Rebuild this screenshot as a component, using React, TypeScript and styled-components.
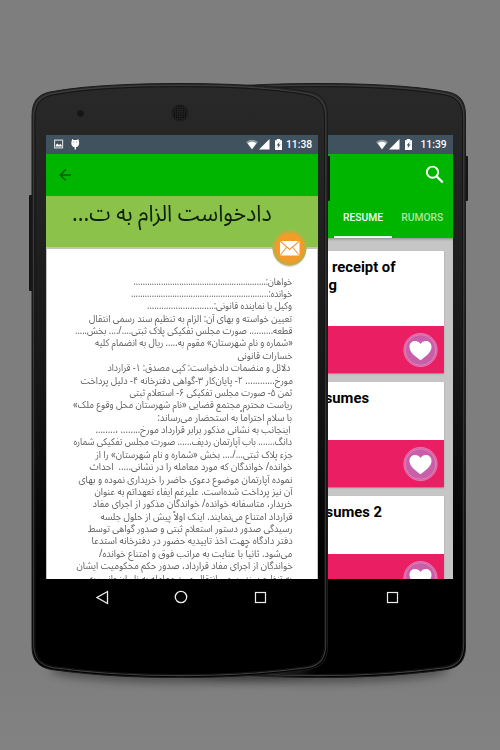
import React, { useLayoutEffect, useRef, useState } from 'react';
import styled, { createGlobalStyle } from 'styled-components';

const GlobalStyle = createGlobalStyle`
  * { box-sizing: border-box; }
  html, body { margin: 0; padding: 0; background: #7f7f7f; }
`;

const Stage = styled.main`
  display: flex;
  width: 500px;
  height: 750px;
  padding: 83px 0 0 32px;
  overflow: hidden;
  background: linear-gradient(#7e7e7e 0, #7e7e7e 660px, #828282 750px);
  font-family: Roboto, 'Noto Sans Arabic', 'Noto Sans', sans-serif;
`;

const Phone = styled.section<{ $front?: boolean }>`
  position: relative;
  flex: none;
  width: 296px;
  height: 597px;
  padding: 52px 0 0 ${(p) => (p.$front ? 14 : 11)}px;
  margin-left: ${(p) => (p.$front ? 0 : -158)}px;
  z-index: ${(p) => (p.$front ? 2 : 1)};
`;

const Body = styled.svg`
  position: absolute;
  left: -6px;
  top: -4px;
  z-index: -1;
  overflow: visible;
`;

const Screen = styled.div<{ $front?: boolean }>`
  display: flex;
  flex-direction: column;
  width: ${(p) => (p.$front ? 272 : 271.5)}px;
  height: 480px;
  overflow: hidden;
  background: #000;
`;

const StatusBar = styled.div`
  display: flex;
  flex: none;
  align-items: center;
  height: 19px;
  padding: 0 6px 0 8px;
  background: #3f525d;
  color: #fff;
`;

const StatusIcons = styled.svg`
  flex: none;
`;

const Spacer = styled.div`
  flex: 1;
`;

const Clock = styled.span<{ $gap: number }>`
  width: 26px;
  margin-left: ${(p) => p.$gap}px;
  font: 500 10.3px/19px Roboto, sans-serif;
  white-space: nowrap;
`;

const Toolbar = styled.header<{ $end?: boolean }>`
  display: flex;
  flex: none;
  align-items: center;
  justify-content: ${(p) => (p.$end ? 'flex-end' : 'flex-start')};
  height: 42px;
  padding: ${(p) => (p.$end ? '0 8.5px 1px 0' : '0 0 0 13px')};
  background: #00b500;
`;

const TitleBand = styled.div`
  position: relative;
  flex: none;
  display: flex;
  justify-content: flex-end;
  height: 53px;
  padding: 0 46px 0 0;
  border-bottom: 2px solid #c0c4bc;
  background: #8bc34a;
`;

const MailButton = styled.svg`
  position: absolute;
  right: 11.5px;
  top: 33px;
  overflow: visible;
`;

const Article = styled.article`
  display: flex;
  flex: none;
  flex-direction: column;
  height: 330px;
  padding: 26.5px 24.5px 0 0;
  overflow: hidden;
  border-left: 1px solid #c4c4c4;
  border-right: 1px solid #c4c4c4;
  background: #fff;
`;

const LineRow = styled.div<{ $size: number; $height: number; $color: string; $inset?: number }>`
  display: flex;
  flex: none;
  justify-content: flex-end;
  height: ${(p) => p.$height}px;
  padding-right: ${(p) => p.$inset ?? 0}px;
  direction: ltr;
  color: ${(p) => p.$color};
  font: 400 ${(p) => p.$size}px/${(p) => p.$height}px 'Noto Sans Arabic', 'Noto Sans', 'Open Sans', sans-serif;
`;

const LineText = styled.span`
  flex: none;
  direction: rtl;
  unicode-bidi: isolate;
  white-space: nowrap;
  transform-origin: 100% 50%;
`;

const NavBar = styled.nav<{ $end: number }>`
  display: flex;
  flex: none;
  align-items: center;
  justify-content: space-between;
  height: 36px;
  padding: 0 ${(p) => p.$end}px 0 49.5px;
`;

const Tabs = styled.div`
  display: flex;
  flex: none;
  justify-content: flex-end;
  height: 42px;
  background: #00b500;
`;

const Tab = styled.div<{ $active?: boolean }>`
  display: flex;
  align-items: center;
  justify-content: center;
  width: ${(p) => (p.$active ? 58 : 60.5)}px;
  padding-top: 3px;
  border-bottom: 2px solid ${(p) => (p.$active ? '#e8ffe8' : 'transparent')};
  color: ${(p) => (p.$active ? '#f0fff0' : '#aae8a5')};
  font: 500 10.3px/12px Roboto, sans-serif;
`;

const List = styled.div`
  display: flex;
  flex: none;
  flex-direction: column;
  gap: 8.5px;
  height: 341px;
  padding: 12.5px 8.5px 0 8px;
  overflow: hidden;
  background: #c6c6c6;
  box-shadow: inset 0 3px 3px -2px #888;
`;

const Card = styled.article<{ $height: number }>`
  display: flex;
  flex: none;
  flex-direction: column;
  height: ${(p) => p.$height}px;
  border-radius: 1px;
  background: #fff;
  box-shadow: 0 1px 1.5px #888;
`;

const CardTitle = styled.h2`
  flex: 1;
  margin: 0;
  padding-top: 7px;
`;

const TitleLine = styled.span<{ $end: number }>`
  display: block;
  padding-right: ${(p) => p.$end}px;
  color: #000;
  font: 700 14.8px/18.4px Roboto, sans-serif;
  text-align: right;
  white-space: nowrap;
`;

const CardFooter = styled.footer`
  display: flex;
  flex: none;
  align-items: center;
  justify-content: flex-end;
  height: 47px;
  padding-right: 6px;
  background: #e91e63;
`;

const article: Array<[string, number, number?]> = [
  ['خواهان:..........................................................', 158.5],
  ['خوانده:............................................................', 161],
  ['وکیل یا نماینده قانونی:............................', 145],
  ['تعیین خواسته و بهای آن: الزام به تنظیم سند رسمی انتقال', 203],
  ['قطعه.......... صورت مجلس تفکیکی پلاک ثبتی..../.... بخش.....', 217],
  ['«شماره و نام شهرستان» مقوم به..... ریال به انضمام کلیه', 198],
  ['خسارات قانونی', 55.5],
  ['دلائل و منضمات دادخواست: کپی مصدق: ۱- قرارداد', 182.5, 2],
  ['مورخ............ ۲- پایان‌کار ۳-گواهی دفترخانه ۴- دلیل پرداخت', 212.5],
  ['ثمن ۵- صورت مجلس تفکیکی ۶- استعلام ثبتی', 162.5],
  ['ریاست محترم مجتمع قضایی «نام شهرستان محل وقوع ملک»', 219],
  ['با سلام احتراماً به استحضار می‌رساند:', 134.5],
  ['اینجانب به نشانی مذکور برابر قرارداد مورخ........ ،........', 195.5, 2],
  ['دانگ....... باب آپارتمان ردیف...... صورت مجلس تفکیکی شماره', 218.5],
  ['جزء پلاک ثبتی.../.... بخش «شماره و نام شهرستان» را از', 197.5],
  ['خوانده/ خواندگان که مورد معامله را در نشانی.....\u00a0 احداث', 203.5],
  ['نموده آپارتمان موضوع دعوی حاضر را خریداری نموده و بهای', 213.5],
  ['آن نیز پرداخت شده‌است. علیرغم ایفاء تعهداتم به عنوان', 197.5],
  ['خریدار، متاسفانه خوانده/ خواندگان مذکور از اجرای مفاد', 200.5],
  ['قرارداد امتناع می‌نمایند. اینک اولاً پیش از حلول جلسه', 192.5],
  ['رسیدگی صدور دستور استعلام ثبتی و صدور گواهی توسط', 205],
  ['دفتر دادگاه جهت اخذ تاییدیه حضور در دفترخانه استدعا', 201.5],
  ['می‌شود. ثانیاً با عنایت به مراتب فوق و امتناع خوانده/', 193],
  ['خواندگان از اجرای مفاد قرارداد، صدور حکم محکومیت ایشان', 216.5],
  ['به تنظیم سند رسمی انتقال مورد معامله به نام اینجانب به', 203],
];

type LineProps = { text: string; width: number; size: number; height: number; color: string; inset?: number };

/* A right-to-left line, set to an exact measure. */
function FittedLine({ text, width, size, height, color, inset }: LineProps) {
  const ref = useRef<HTMLSpanElement>(null);
  const [scale, setScale] = useState(1);
  useLayoutEffect(() => {
    if (ref.current) setScale(width / ref.current.offsetWidth);
  }, [width, text]);
  return (
    <LineRow $size={size} $height={height} $color={color} $inset={inset}>
      <LineText ref={ref} lang="fa" style={{ transform: `scaleX(${scale})` }}>{text}</LineText>
    </LineRow>
  );
}

function PhoneBody({ id, front }: { id: string; front?: boolean }) {
  const shape = 'M6 37 C6 22 12 15.500 24 13 C60 6 115 4.500 154 4.500 C193 4.500 248 6 284 13 C296 15.500 301.500 22 301.500 37 L301.500 567 C301.500 581 296 588 283 590.500 C235 597 195 598.500 154 598.500 C113 598.500 73 597 25 590.500 C12 588 6 581 6 567 Z';
  return (
    <Body width="308" height="606" viewBox="0 0 308 606">
      <defs>
        <linearGradient id={`${id}-fill`} x1="0" y1="0" x2="0" y2="1">
          <stop offset="0" stopColor="#292929" />
          <stop offset=".15" stopColor="#242424" />
          <stop offset=".5" stopColor="#161616" />
          <stop offset=".75" stopColor="#050505" />
          <stop offset=".84" stopColor="#000" />
        </linearGradient>
        <filter id={`${id}-blur`} x="-20%" y="-60%" width="140%" height="220%">
          <feGaussianBlur stdDeviation="4" />
        </filter>
        <pattern id={`${id}-mesh`} width="2.200" height="2.200" patternUnits="userSpaceOnUse">
          <circle cx="1" cy="1" r=".75" fill="#050505" />
        </pattern>
      </defs>
      <ellipse cx="154" cy="591" rx="130" ry="13" fill="#333" opacity=".6" filter={`url(#${id}-blur)`} />
      {front && <rect x="3" y="116" width="4" height="96" rx="1" fill="#151515" />}
      <rect x="300" y="77" width="4" height="45" rx="1" fill="#151515" />
      <path d={shape} fill={`url(#${id}-fill)`} stroke="#1b1b1b" strokeWidth="1" />
      <path d={shape} fill="none" stroke="#3c3c3c" strokeWidth="1.200" transform="translate(1.800 2) scale(.988 .9935)" />
      <path d={shape} fill="none" stroke="#141414" strokeWidth="1" transform="translate(3.100 3.200) scale(.98 .9895)" />
      {front && (
        <>
          <circle cx="54.500" cy="34.500" r="3.300" fill="#151515" />
          <circle cx="154" cy="34" r="8" fill="#262626" stroke="#151515" strokeWidth=".7" />
          <circle cx="154" cy="34" r="7.200" fill={`url(#${id}-mesh)`} />
        </>
      )}
    </Body>
  );
}

function SystemStatus() {
  return (
    <StatusIcons width="38" height="13" viewBox="0 0 38 13">
      <path d="M0 4 Q6 -.5 12 4 L6 11.500 Z" fill="#8c989e" />
      <path d="M1.700 5.200 Q6 2.500 10.300 5.200 L6 11.200 Z" fill="#fff" />
      <path d="M13 11.500 L23.500 1 V11.500 Z" fill="#fff" />
      <path d="M30.800 1 H34.200 V2.200 H36 V12 H29 V2.200 H30.800 Z" fill="#fff" />
      <path d="M33.600 3.800 L30.600 7.500 H32.300 L31.600 10.300 L34.600 6.600 H32.900 Z" fill="#3f525d" />
    </StatusIcons>
  );
}

function Favorite() {
  return (
    <svg width="35" height="36" viewBox="0 0 35 36">
      <circle cx="17.500" cy="18" r="16.600" fill="#d458a0" stroke="#ed75ab" />
      <circle cx="17.500" cy="18" r="15.300" fill="#c95fa8" stroke="#dfa0ca" strokeWidth=".6" />
      <path d="M17.500 28.300 C13 25 6.500 20.500 6.500 15 C6.500 8 15 7.500 17.500 12 C20 7.500 28.500 8 28.500 15 C28.500 20.500 22 25 17.500 28.300 Z" fill="#fff" />
    </svg>
  );
}

function Navigation({ end }: { end: number }) {
  return (
    <NavBar $end={end}>
      <svg width="13" height="15" viewBox="0 0 13 15"><path d="M11.500 1.500 V13.500 L1 7.500 Z" fill="none" stroke="#eee" strokeWidth="1.300" /></svg>
      <svg width="14" height="14" viewBox="0 0 14 14"><circle cx="7" cy="7" r="5.700" fill="none" stroke="#eee" strokeWidth="1.300" /></svg>
      <svg width="13" height="13" viewBox="0 0 13 13"><rect x="1.500" y="1.500" width="10" height="10" fill="none" stroke="#eee" strokeWidth="1.200" /></svg>
    </NavBar>
  );
}

export default function App() {
  return (
    <>
      <GlobalStyle />
      <Stage>
        <Phone $front>
          <PhoneBody id="front" front />
          <Screen $front>
            <StatusBar>
              <StatusIcons width="28" height="13" viewBox="0 0 28 13">
                <rect x=".6" y="2.100" width="8" height="7.800" fill="none" stroke="#d8dde0" strokeWidth="1.100" />
                <path d="M1.800 8.500 V7 L3.500 5.500 L5 7 L6.500 6 L7.700 7.200 V8.500 Z" fill="#fff" />
                <path d="M17.500 3.500 L18.200 1 L19.800 2 H22.700 L24.300 1 L25 3.500 C25.700 7 24 9 22 9.300 V11.500 H20.600 V9.300 C18.500 9 16.700 7 17.500 3.500 Z" fill="#fff" />
                <circle cx="19.800" cy="4" r=".5" fill="#667" /><circle cx="22.700" cy="4" r=".5" fill="#667" />
              </StatusIcons>
              <Spacer />
              <SystemStatus />
              <Clock $gap={2.5}>11:38</Clock>
            </StatusBar>
            <Toolbar>
              <svg width="13" height="14" viewBox="0 0 13 14"><path d="M12 7 H1.500 M6.700 1.500 L1.200 7 L6.700 12.500" fill="none" stroke="#075c07" strokeWidth="1.400" /></svg>
            </Toolbar>
            <TitleBand>
              <FittedLine text="دادخواست الزام به ت..." width={200} size={23} height={35} color="#10200b" />
              <MailButton width="35" height="38" viewBox="0 0 35 38">
                <ellipse cx="17.500" cy="20.500" rx="17" ry="17.500" fill="#888" opacity=".3" />
                <ellipse cx="17.500" cy="19" rx="17" ry="17.700" fill="#c3ac3d" />
                <ellipse cx="17.500" cy="19" rx="14.300" ry="15" fill="#f59b2a" />
                <rect x="8" y="12" width="19.500" height="14.500" fill="#fff" />
                <path d="M8 12 L17.700 20.500 L27.500 12 M8 26.500 L14.500 18.500 M27.500 26.500 L20.800 18.500" fill="none" stroke="#f69a35" strokeWidth="1.100" />
              </MailButton>
            </TitleBand>
            <Article>
              {article.map(([text, width, inset]) => (
                <FittedLine key={text} text={text} width={width} inset={inset} size={9.9} height={12.375} color="#606060" />
              ))}
            </Article>
            <Navigation end={51} />
          </Screen>
        </Phone>
        <Phone>
          <PhoneBody id="back" />
          <Screen>
            <StatusBar>
              <Spacer />
              <SystemStatus />
              <Clock $gap={6.5}>11:39</Clock>
            </StatusBar>
            <Toolbar $end>
              <svg width="19" height="19" viewBox="0 0 19 19"><circle cx="7.500" cy="7.200" r="5.600" fill="none" stroke="#fff" strokeWidth="1.900" /><path d="M11.500 11.200 L17.700 17.400" stroke="#fff" strokeWidth="2.200" /></svg>
            </Toolbar>
            <Tabs>
              <Tab $active>RESUME</Tab>
              <Tab>RUMORS</Tab>
            </Tabs>
            <List>
              <Card $height={122.5}>
                <CardTitle><TitleLine $end={48.5}>receipt of</TitleLine><TitleLine $end={107}>g</TitleLine></CardTitle>
                <CardFooter><Favorite /></CardFooter>
              </Card>
              <Card $height={105.5}>
                <CardTitle><TitleLine $end={75}>Resumes</TitleLine></CardTitle>
                <CardFooter><Favorite /></CardFooter>
              </Card>
              <Card $height={105.5}>
                <CardTitle><TitleLine $end={62}>Resumes 2</TitleLine></CardTitle>
                <CardFooter><Favorite /></CardFooter>
              </Card>
            </List>
            <Navigation end={53.5} />
          </Screen>
        </Phone>
      </Stage>
    </>
  );
}
